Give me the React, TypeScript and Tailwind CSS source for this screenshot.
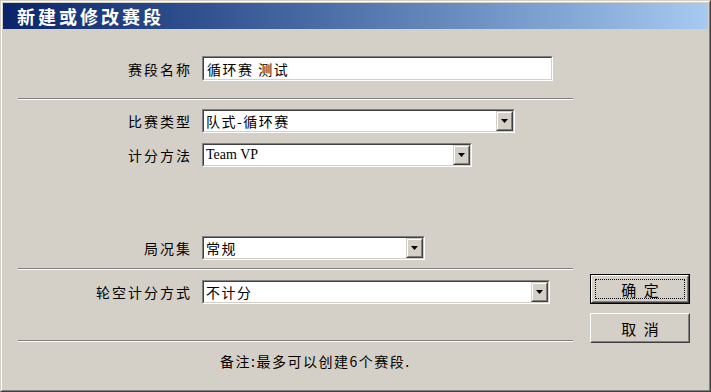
import React from 'react';

const cjk = '"Noto Sans CJK SC", "Liberation Sans", sans-serif';

function Sunken({ width, height, children }: { width: string; height: string; children: React.ReactNode }) {
  return (
    <div className={`${width} ${height} border border-t-[#808080] border-l-[#808080] border-b-white border-r-white`}>
      <div className="h-full flex items-center bg-white border border-t-[#404040] border-l-[#404040] border-b-[#d4d0c8] border-r-[#d4d0c8]">
        {children}
      </div>
    </div>
  );
}

function ArrowButton() {
  return (
    <div className="w-[17px] h-full shrink-0 border border-t-[#d4d0c8] border-l-[#d4d0c8] border-b-[#404040] border-r-[#404040]">
      <div className="h-full flex items-center justify-center bg-[#d4d0c8] border border-t-white border-l-white border-b-[#808080] border-r-[#808080]">
        <svg width="7" height="4" viewBox="0 0 7 4">
          <path d="M0 0h7L3.5 4z" fill="#000" />
        </svg>
      </div>
    </div>
  );
}

function Select({ width, value, serif }: { width: string; value: string; serif?: boolean }) {
  return (
    <Sunken width={width} height="h-[24px]">
      <span
        className={`flex-1 pl-[2px] text-[14px] leading-none text-black ${serif ? '' : 'tracking-[1.5px]'}`}
        style={{ fontFamily: serif ? '"Liberation Serif", serif' : cjk }}
      >
        {value}
      </span>
      <ArrowButton />
    </Sunken>
  );
}

function Label({ text }: { text: string }) {
  return (
    <div className="w-[174px] mr-[10px] text-right text-[14px] tracking-[2px] text-black leading-none">{text}</div>
  );
}

function Separator({ className }: { className: string }) {
  return <div className={`${className} w-[555px] h-[2px] border-t border-t-[#808080] border-b border-b-white`} />;
}

export default function App() {
  return (
    <div className="w-[711px] h-[392px] bg-[#d4d0c8] border border-t-[#d4d0c8] border-l-[#d4d0c8] border-b-[#404040] border-r-[#404040]" style={{ fontFamily: cjk }}>
      <div className="h-full p-[1px] border border-t-white border-l-white border-b-[#808080] border-r-[#808080] flex flex-col">
        {/* title bar */}
        <div className="h-[26px] shrink-0 flex items-center pl-[14px] bg-gradient-to-r from-[#0a246a] to-[#a6caf0]">
          <span className="text-white font-bold text-[18px] tracking-[3px] leading-none">新建或修改赛段</span>
        </div>

        <div className="flex flex-row pl-[15px]">
          {/* form column */}
          <div className="w-[555px] flex flex-col pt-[27px]">
            <div className="flex items-center">
              <Label text="赛段名称" />
              <Sunken width="w-[351px]" height="h-[25px]">
                <span className="pl-[3px] text-[14px] tracking-[1.5px] leading-none text-black">循环赛 测试</span>
              </Sunken>
            </div>

            <Separator className="mt-[17px]" />

            <div className="flex items-center mt-[9px]">
              <Label text="比赛类型" />
              <Select width="w-[313px]" value="队式-循环赛" />
            </div>
            <div className="flex items-center mt-[10px]">
              <Label text="计分方法" />
              <Select width="w-[270px]" value="Team VP" serif />
            </div>

            <div className="flex items-center mt-[69px]">
              <Label text="局况集" />
              <Select width="w-[223px]" value="常规" />
            </div>

            <Separator className="mt-[8px]" />

            <div className="flex items-center mt-[10px]">
              <Label text="轮空计分方式" />
              <Select width="w-[348px]" value="不计分" />
            </div>

            <Separator className="mt-[36px]" />

            <div className="mt-[9px] pl-[202px] text-[14px] leading-[20px] tracking-[1.5px] text-black">
              备注:最多可以创建6个赛段.
            </div>
          </div>

          {/* buttons */}
          <div className="ml-[17px] w-[100px] flex flex-col pt-[245px] gap-[9px]">
            <button className="w-[100px] h-[30px] border border-black bg-[#d4d0c8] p-0">
              <div className="h-full border border-t-white border-l-white border-b-[#404040] border-r-[#404040]">
                <div className="h-full p-[2px] border border-t-[#d4d0c8] border-l-[#d4d0c8] border-b-[#808080] border-r-[#808080]">
                  <div className="h-full flex items-center justify-center border border-dotted border-black text-[15px] tracking-[2px] pl-[2px] leading-none text-black">
                    确 定
                  </div>
                </div>
              </div>
            </button>
            <button className="w-[100px] h-[30px] bg-[#d4d0c8] p-0 border border-t-white border-l-white border-b-[#404040] border-r-[#404040]">
              <div className="h-full flex items-center justify-center border border-t-[#d4d0c8] border-l-[#d4d0c8] border-b-[#808080] border-r-[#808080] text-[15px] tracking-[2px] pl-[2px] leading-none text-black">
                取 消
              </div>
            </button>
          </div>
        </div>
      </div>
    </div>
  );
}
